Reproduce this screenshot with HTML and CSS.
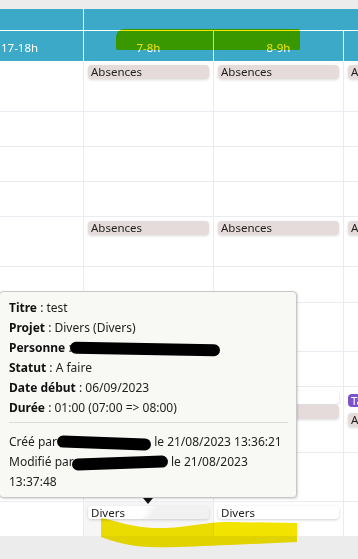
FILE: index.html
```html
<!DOCTYPE html>
<html lang="fr">
<head>
    <meta charset="UTF-8" />
    <meta name="viewport" content="width=device-width, initial-scale=1.0" />
    <title>Planning</title>
    <link rel="stylesheet" href="styles.css">
</head>
<body>
<div class="screen">
    <div class="topbar"></div>

    <!-- ===== En-tête du planning ===== -->
    <div class="head">
        <div class="head-row days">
            <div class="hcell first"></div>
            <div class="hcell day"></div>
        </div>
        <div class="head-row hours">
            <div class="hcell first">17-18h</div>
            <div class="hcell">7-8h</div>
            <div class="hcell">8-9h</div>
            <div class="hcell"></div>
        </div>
    </div>

    <!-- ===== Grille ===== -->
    <div class="grid">
        <div class="row h51">
            <div class="cell"></div>
            <div class="cell"><div class="item abs">Absences</div></div>
            <div class="cell"><div class="item abs">Absences</div></div>
            <div class="cell"><div class="item abs">Absences</div></div>
        </div>
        <div class="row h35"><div class="cell"></div><div class="cell"></div><div class="cell"></div><div class="cell"></div></div>
        <div class="row h35"><div class="cell"></div><div class="cell"></div><div class="cell"></div><div class="cell"></div></div>
        <div class="row h35"><div class="cell"></div><div class="cell"></div><div class="cell"></div><div class="cell"></div></div>
        <div class="row h50">
            <div class="cell"></div>
            <div class="cell"><div class="item abs">Absences</div></div>
            <div class="cell"><div class="item abs">Absences</div></div>
            <div class="cell"><div class="item abs">Absences</div></div>
        </div>
        <div class="row h36"><div class="cell"></div><div class="cell"></div><div class="cell"></div><div class="cell"></div></div>
        <div class="row h49"><div class="cell"></div><div class="cell"></div><div class="cell"></div><div class="cell"></div></div>
        <div class="row h35"><div class="cell"></div><div class="cell"></div><div class="cell"></div><div class="cell"></div></div>
        <div class="row h66">
            <div class="cell"></div>
            <div class="cell">
                <div class="item task">Divers</div>
                <div class="item abs">Absences</div>
            </div>
            <div class="cell">
                <div class="item task">Divers</div>
                <div class="item abs">Absences</div>
            </div>
            <div class="cell">
                <div class="item tag">Tâche</div>
                <div class="item abs">Absences</div>
            </div>
        </div>
        <div class="row h49"><div class="cell"></div><div class="cell"></div><div class="cell"></div><div class="cell"></div></div>
        <div class="row h34 last">
            <div class="cell"></div>
            <div class="cell hover"><div class="item task grey">Divers</div></div>
            <div class="cell"><div class="item task">Divers</div></div>
            <div class="cell"></div>
        </div>
    </div>

    <div class="bottombar"></div>

    <!-- ===== Infobulle ===== -->
    <div class="tooltip">
        <p><b>Titre</b> : test</p>
        <p><b>Projet</b> : Divers (Divers)</p>
        <p><b>Personne</b> :<span class="redact r1"></span></p>
        <p><b>Statut</b> : A faire</p>
        <p><b>Date début</b> : 06/09/2023</p>
        <p><b>Durée</b> : 01:00 (07:00 =&gt; 08:00)</p>
        <hr>
        <p>Créé par<span class="redact r2"></span> le 21/08/2023 13:36:21</p>
        <p>Modifié par<span class="redact r3"></span> le 21/08/2023 13:37:48</p>
    </div>

    <!-- ===== Surlignages ===== -->
    <div class="mark-top"></div>
    <svg class="mark-bottom" width="358" height="559" viewBox="0 0 358 559">
        <path d="M101,518 C115,520 130,528 160,528 C190,528 200,522 230,522 L297,523 L297,542 L230,545 C200,546 170,548 150,547 C125,546 110,540 101,537 Z" fill="#f3e400"/>
    </svg>
</div>
</body>
</html>
```

FILE: styles.css
```css
:root {
    --blue: #3ca9c9;
    --line: #e8ebef;
    --grey: #ececec;
    --abs: #e5dbdb;
}

body {
    margin: 0;
    font-family: "Noto Sans", Arial, sans-serif;
    color: #222;
    background: var(--grey);
}

.screen {
    position: relative;
    width: 358px;
    height: 559px;
    overflow: hidden;
    background: var(--grey);
}

.topbar {
    height: 9px;
    background: var(--grey);
}

/* ====== En-tête ====== */
.head {
    background: var(--blue);
    color: #fff;
    font-size: 11.5px;
    width: 480px;
}
.head-row {
    display: grid;
    grid-template-columns: 84px 130px 130px 136px;
}
.head-row.days {
    grid-template-columns: 84px 396px;
    height: 22px;
    border-bottom: 1px solid #fff;
    box-sizing: border-box;
}
.head-row.hours {
    height: 30px;
}
.hcell {
    border-right: 1px solid #fff;
    display: flex;
    align-items: center;
    justify-content: center;
}
.hcell.first {
    justify-content: flex-start;
    padding-left: 1px;
}
.head-row.hours .hcell {
    padding-top: 2px;
}

/* ====== Grille ====== */
.grid {
    background: #fff;
    width: 480px;
}
.row {
    display: grid;
    grid-template-columns: 84px 130px 130px 136px;
    border-bottom: 1px solid var(--line);
    box-sizing: border-box;
}
.row.last { border-bottom: 0; }
.h51 { height: 51px; }
.h50 { height: 50px; }
.h49 { height: 49px; }
.h36 { height: 36px; }
.h35 { height: 35px; }
.h34 { height: 34px; }
.h66 { height: 66px; }

.cell {
    border-right: 1px solid var(--line);
    padding: 4px 4px 0;
}
.row .cell:first-child { padding: 0; }
.cell.hover { background: #f6f6f6; }

.item {
    height: 14px;
    line-height: 14px;
    font-size: 11.5px;
    padding-left: 3px;
    border-radius: 4px;
    white-space: nowrap;
    overflow: hidden;
}
.item.abs {
    background: var(--abs);
    box-shadow: 0 1px 3px rgba(0, 0, 0, 0.15);
}
.item.task {
    height: 13px;
    background: #fff;
    box-shadow: 0 1px 3px rgba(0, 0, 0, 0.18);
    margin-bottom: 1px;
}
.item.task.grey {
    background: linear-gradient(120deg, #fff 46%, #f1f1f1 54%);
}
.item.tag {
    display: inline-block;
    height: 13px;
    background: #7b52c9;
    color: #fff;
    padding: 0 3px;
    margin-bottom: 1px;
}

.bottombar {
    height: 23px;
    background: var(--grey);
}

/* ====== Infobulle ====== */
.tooltip {
    position: absolute;
    left: -1px;
    top: 291px;
    width: 298px;
    box-sizing: border-box;
    padding: 6px 8px 5px 9px;
    background: #f8f8f4;
    border: 1px solid #c8c8c8;
    border-radius: 4px;
    box-shadow: 1px 1px 2px rgba(0, 0, 0, 0.15);
    font-size: 12px;
    line-height: 20px;
    color: #222;
}
.tooltip p { margin: 0; }
.tooltip b { font-weight: bold; color: #111; }
.tooltip hr {
    border: 0;
    border-top: 1px solid #dcdcd8;
    margin: 4px 0 9px;
}
.tooltip::after {
    content: "";
    position: absolute;
    left: 143px;
    bottom: -7px;
    border-left: 5px solid transparent;
    border-right: 5px solid transparent;
    border-top: 6px solid #111;
}
.redact {
    display: inline-block;
    background: #000;
    border-radius: 8px;
    height: 12px;
    vertical-align: middle;
}
.r1 { width: 150px; margin-left: -2px; transform: rotate(1deg); }
.r2 { width: 94px; margin-left: 0; transform: rotate(2deg); }
.r3 { width: 96px; margin-left: -2px; transform: rotate(-2deg); }

/* ====== Surlignages ====== */
.mark-top {
    position: absolute;
    left: 116px;
    top: 29px;
    width: 184px;
    height: 21px;
    background: #f0e400;
    border-radius: 8px 2px 2px 2px;
    mix-blend-mode: multiply;
}
.mark-bottom {
    position: absolute;
    left: 0;
    top: 0;
    mix-blend-mode: multiply;
    pointer-events: none;
}
```
